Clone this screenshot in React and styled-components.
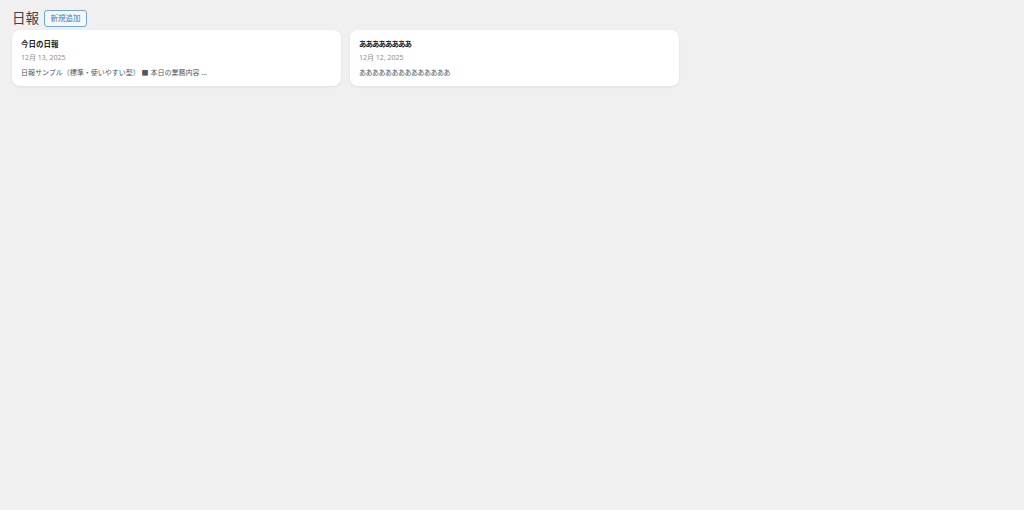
import styled, { createGlobalStyle } from "styled-components"

const GlobalStyle = createGlobalStyle`
    html, body {
        margin: 0;
        background: #f0f0f1;
        font-family: "Noto Sans", "Noto Sans CJK JP", sans-serif;
    }
`

const Page = styled.div`
    padding: 10px 12px;
    min-height: 100vh;
    box-sizing: border-box;
`

const Header = styled.div`
    display: flex;
    align-items: center;
    gap: 5px;
    height: 17px;
    margin-bottom: 3px;
`

const Title = styled.h1`
    margin: 0;
    font-size: 13.5px;
    font-weight: 400;
    color: #3c434a;
    line-height: 1;
`

const AddButton = styled.button`
    font-family: inherit;
    font-size: 7.5px;
    color: #3582c4;
    background: #f6f7f7;
    border: 1px solid #72a4d4;
    border-radius: 3px;
    height: 17px;
    width: 43px;
    padding: 0;
    line-height: 1;
`

const Grid = styled.div`
    display: grid;
    grid-template-columns: repeat(3, 329px);
    gap: 9px;
`

const Card = styled.div`
    background: #fff;
    border-radius: 8px;
    box-shadow: 0 1px 3px rgba(0, 0, 0, 0.08);
    padding: 9px 9px 8px;
    height: 56px;
    box-sizing: border-box;
`

const CardTitle = styled.div`
    font-size: 7.5px;
    font-weight: 700;
    color: #1d2327;
    line-height: 10px;
    letter-spacing: ${(p) => (p.$narrow ? "-1px" : "0")};
`

const CardDate = styled.div`
    font-size: 7px;
    color: #8c8f94;
    margin-top: 4px;
    line-height: 10px;
`

const Excerpt = styled.div`
    font-size: 7px;
    color: #50575e;
    margin-top: 5px;
    line-height: 10px;
    letter-spacing: ${(p) => (p.$narrow ? "-0.5px" : "0")};
`

const reports = [
    { title: "今日の日報", date: "12月 13, 2025", excerpt: "日報サンプル（標準・使いやすい型） ■ 本日の業務内容 ...", narrow: false },
    { title: "ああああああああ", date: "12月 12, 2025", excerpt: "ああああああああああああああ", narrow: true },
]

const App = () => {
    return (
        <>
            <GlobalStyle />
            <Page>
                <Header>
                    <Title>日報</Title>
                    <AddButton>新規追加</AddButton>
                </Header>
                <Grid>
                    {reports.map((r) => (
                        <Card key={r.date}>
                            <CardTitle $narrow={r.narrow}>{r.title}</CardTitle>
                            <CardDate>{r.date}</CardDate>
                            <Excerpt $narrow={r.narrow}>{r.excerpt}</Excerpt>
                        </Card>
                    ))}
                </Grid>
            </Page>
        </>
    )
}

export default App
